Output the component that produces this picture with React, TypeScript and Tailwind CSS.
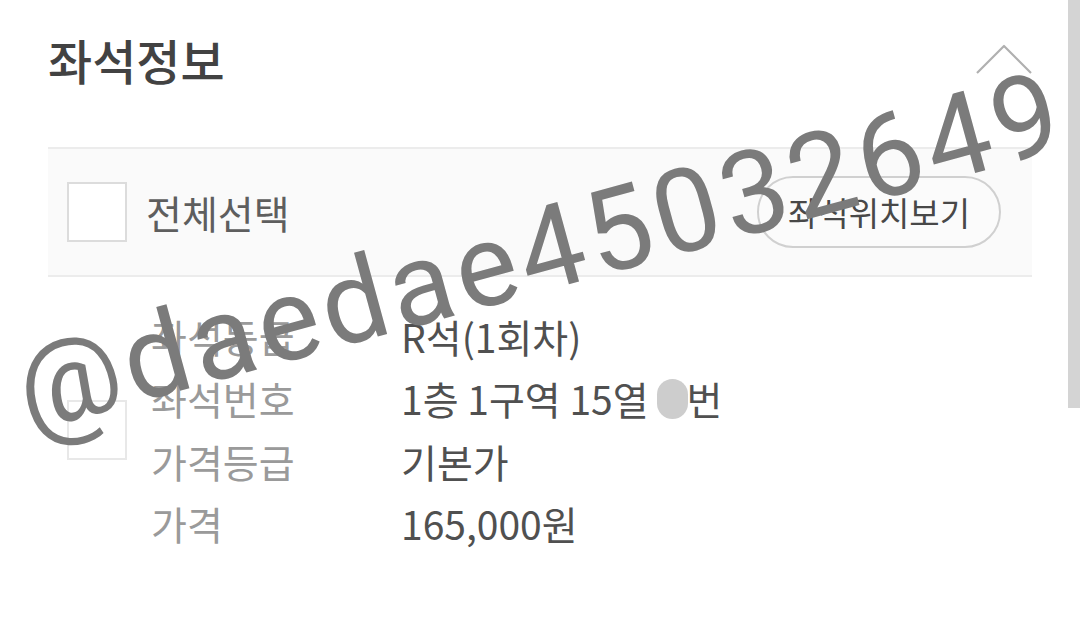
import React from 'react';

const rows = [
  { label: '좌석등급', value: 'R석(1회차)' },
  { label: '좌석번호', value: '1층 1구역 15열', masked: '번' },
  { label: '가격등급', value: '기본가' },
  { label: '가격', value: '165,000원' },
];

const Checkbox = ({ light }: { light?: boolean }) => (
  <div
    className={`h-[60px] w-[60px] shrink-0 border-2 bg-white ${
      light ? 'border-[#e8e8e8]' : 'border-[#dcdcdc]'
    }`}
  />
);

export default function App() {
  return (
    <div
      className="relative flex h-[640px] w-[1080px] overflow-hidden bg-white"
      style={{ fontFamily: '"Noto Sans CJK KR", "Noto Sans", sans-serif' }}
    >
      <div className="flex-1 pl-[48px] pr-[36px]">
        {/* header */}
        <div className="flex h-[120px] items-center justify-between pb-[2px]">
          <h2 className="text-[48px] font-medium leading-none text-[#424242]">좌석정보</h2>
          <svg width="58" height="32" viewBox="0 0 58 32" className="mr-[-1px]">
            <polyline points="2,30 29,3 56,30" fill="none" stroke="#b0b0b0" strokeWidth="2.2" strokeLinejoin="round" />
          </svg>
        </div>

        {/* select all bar */}
        <div className="mt-[27px] flex h-[130px] items-center justify-between border-y-2 border-[#ececec] bg-[#fafafa] pl-[19px] pr-[31px]">
          <div className="flex items-center gap-[19px]">
            <Checkbox />
            <span className="text-[39px] leading-none text-[#5e5e5e]">전체선택</span>
          </div>
          <button className="flex h-[72px] w-[244px] items-center justify-center rounded-full border-2 border-[#d0d0d0] bg-[#fbfbfb] text-[33px] leading-none text-[#484848]">
            좌석위치보기
          </button>
        </div>

        {/* seat item */}
        <div className="mt-[28px] flex items-center pl-[19px]">
          <Checkbox light />
          <div className="ml-[24px] flex flex-col">
            {rows.map((r) => (
              <div key={r.label} className="flex h-[62.5px] items-center text-[39px] leading-none">
                <span className="w-[250px] text-[#9a9a9a]">{r.label}</span>
                <span className="flex items-center text-[#505050]">
                  {r.value}
                  {r.masked && (
                    <>
                      <span className="ml-[8px] mr-[-1px] inline-block h-[40px] w-[31px] rounded-full bg-[#cdcdcd]" />
                      {r.masked}
                    </>
                  )}
                </span>
              </div>
            ))}
          </div>
        </div>
      </div>

      {/* scrollbar */}
      <div className="w-[12px] shrink-0">
        <div className="h-[408px] w-full bg-[#d4d4d4]" />
      </div>

      {/* watermark */}
      <span
        className="pointer-events-none absolute left-[29px] top-[334px] origin-[0_98px] -rotate-[15.3deg] whitespace-nowrap text-[116px] font-normal leading-none tracking-[5px] text-[#7b7b7b]"
        style={{ fontFamily: 'Roboto, "Liberation Sans", sans-serif' }}
      >
        @daedae45032649
      </span>
    </div>
  );
}
